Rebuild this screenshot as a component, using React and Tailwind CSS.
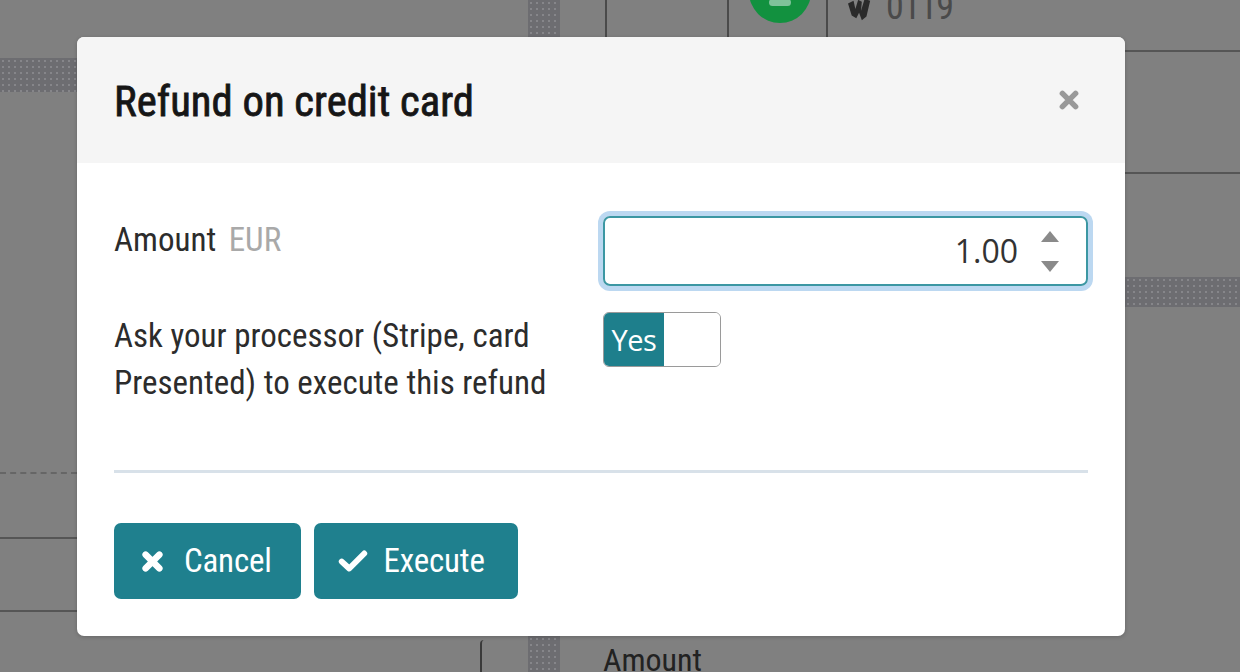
const dots = "bg-[#6d6d71] bg-[radial-gradient(#86868a_1px,transparent_1.2px)] bg-[length:6px_6px]";

function XIcon({ className, sw = "5.2" }) {
  return (
    <svg viewBox="0 0 20 20" className={className} fill="none" stroke="currentColor" strokeWidth={sw} strokeLinecap="round">
      <path d="M4 4 L16 16 M16 4 L4 16" />
    </svg>
  );
}

function CheckIcon({ className }) {
  return (
    <svg viewBox="0 0 28 22" className={className} fill="none" stroke="currentColor" strokeWidth="5.5" strokeLinecap="round" strokeLinejoin="round">
      <path d="M3.5 11.5 L10.5 18 L24.5 4" />
    </svg>
  );
}

function Spinner() {
  return (
    <div className="flex flex-col items-center gap-[19px]">
      <svg viewBox="0 0 18 11" className="w-[18px] h-[11px] text-[#8a8a8a]" fill="currentColor">
        <path d="M9 0 L18 11 L0 11 Z" />
      </svg>
      <svg viewBox="0 0 18 11" className="w-[18px] h-[11px] text-[#8a8a8a]" fill="currentColor">
        <path d="M0 0 L18 0 L9 11 Z" />
      </svg>
    </div>
  );
}

export default function App() {
  return (
    <div className="relative w-[1240px] h-[672px] overflow-hidden bg-[#808080] flex flex-col" style={{ fontFamily: '"Roboto Condensed", "Liberation Sans", sans-serif' }}>
      {/* background page (dimmed) */}
      <div className="h-[37px] flex shrink-0">
        <div className="w-[528px]" />
        <div className={`w-[32px] ${dots}`} />
        <div className="w-[45px]" />
        <div className="w-[122px] border-l-2 border-[#4a4a4a]" />
        <div className="w-[99px] border-l-2 border-[#4a4a4a] flex justify-center">
          <div className="w-[62px] h-[62px] ml-[4px] mt-[-39px] rounded-full bg-[#12913f] flex items-end justify-center pb-[17px]">
            <div className="w-[22px] h-[7px] bg-[#7fc29a] rounded-sm" />
          </div>
        </div>
        <div className="flex-1 border-l-2 border-[#4a4a4a] flex items-start pl-[18px] gap-[12px]">
          <svg viewBox="0 0 28 26" className="w-[28px] h-[24px] mt-[-2px] text-[#2a2a2a]" fill="currentColor">
            <path d="M1 6 L7 3 L9 12 L12 2 L16 4 L15 14 L19 1 L25 3 L21 20 L16 24 L13 16 L10 22 L5 19 Z" />
          </svg>
          <span className="text-[36px] leading-[26px] text-[#4a4a4a] mt-[-6px] tracking-[-1px]">0119</span>
        </div>
      </div>
      <div className="h-[599px] flex shrink-0">
        <div className="w-[77px] flex flex-col">
          <div className={`mt-[21px] h-[34px] ${dots}`} />
          <div className="mt-[380px] border-t-2 border-dashed border-[#666]" />
          <div className="mt-[63px] border-t-2 border-[#555]" />
          <div className="mt-[71px] border-t-2 border-[#555]" />
        </div>
        <div className="flex-1" />
        <div className="w-[115px] flex flex-col">
          <div className="mt-[13px] border-t-2 border-[#555]" />
          <div className="mt-[120px] border-t-2 border-[#555]" />
          <div className={`mt-[103px] h-[30px] ${dots}`} />
        </div>
      </div>
      <div className="h-[36px] flex shrink-0">
        <div className="w-[480px]" />
        <div className="w-[48px] border-l-2 border-[#3a3a3a] rounded-tl-[4px] mt-[4px]" />
        <div className={`w-[32px] ${dots}`} />
        <div className="w-[43px]" />
        <span className="text-[32px] leading-[36px] text-[#222] mt-[6px]">Amount</span>
      </div>

      {/* modal */}
      <div className="absolute left-[77px] top-[37px] w-[1048px] h-[599px] rounded-[7px] bg-white overflow-hidden shadow-[0_1px_4px_rgba(0,0,0,0.2)] flex flex-col">
        <div className="h-[126px] shrink-0 bg-[#f5f5f5] flex items-center justify-between pl-[37px] pr-[45px]">
          <h2 className="text-[42.7px] font-normal text-[#161616] leading-none mt-[2px] [-webkit-text-stroke:0.8px_#161616]">Refund on credit card</h2>
          <XIcon className="w-[22px] h-[22px] text-[#999]" sw="5" />
        </div>
        <div className="flex-1 px-[37px] pt-[53px] flex flex-col">
          <div className="grid grid-cols-[489px_1fr] gap-y-[26px]">
            <div className="text-[33px] leading-[47px] text-[#2c2c2c]">
              Amount <span className="text-[#a9a9a9] ml-[5px]">EUR</span>
            </div>
            <div className="h-[70px] rounded-[7px] border-2 border-[#3c97a3] ring-[5px] ring-[#bcd8f1] flex items-center justify-end pr-[27px] gap-[23px]">
              <span className="text-[32px] text-[#333]" style={{ fontFamily: '"Open Sans", sans-serif' }}>1.00</span>
              <Spinner />
            </div>
            <div className="text-[33px] leading-[47px] text-[#2c2c2c]">
              Ask your processor (Stripe, card<br />Presented) to execute this refund
            </div>
            <div>
              <div className="w-[118px] h-[55px] rounded-[6px] border border-[#9a9a9a] overflow-hidden flex">
                <div className="w-[60px] bg-[#1e7f8c] text-white flex items-center justify-center text-[29px] tracking-[-0.5px]" style={{ fontFamily: '"Open Sans", sans-serif' }}>Yes</div>
                <div className="flex-1 bg-white" />
              </div>
            </div>
          </div>
          <div className="mt-[64px] h-[3px] bg-[#d8e1e9]" />
          <div className="mt-[50px] flex gap-[13px]">
            <button className="h-[76px] rounded-[7px] bg-[#1f808e] text-white flex items-center pl-[27px] pr-[29px] gap-[20px] text-[33px]">
              <XIcon className="w-[23px] h-[23px]" sw="5.6" />
              <span className="tracking-[-0.2px]">Cancel</span>
            </button>
            <button className="h-[76px] rounded-[7px] bg-[#1f808e] text-white flex items-center pl-[24px] pr-[33px] gap-[16px] text-[33px]">
              <CheckIcon className="w-[30px] h-[24px]" />
              <span className="tracking-[-0.2px]">Execute</span>
            </button>
          </div>
        </div>
      </div>
    </div>
  );
}
